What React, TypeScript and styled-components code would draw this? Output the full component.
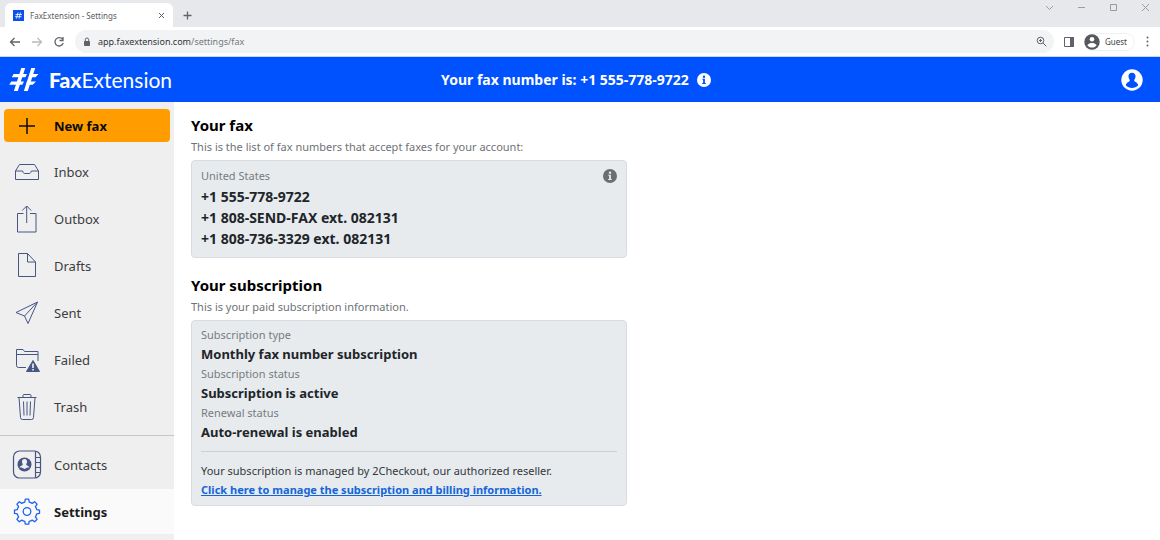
import React from "react";
import styled, { createGlobalStyle, css } from "styled-components";

const GlobalStyle = createGlobalStyle`
  * { box-sizing: border-box; }
  body { margin: 0; background: #fff; font-family: "Noto Sans", "Open Sans", sans-serif; font-size: 11px; color: #212529; }
  button, input { font: inherit; }
  h2, p, dl, dd, dt, ul { margin: 0; padding: 0; }
`;

const Page = styled.div`
  min-height: 100vh;
  display: flex;
  flex-direction: column;
`;

const TabStrip = styled.div`
  height: 27px;
  padding: 3px 10px 0 5px;
  background: #e7e8ec;
  display: flex;
  align-items: stretch;
`;

const Tab = styled.div`
  width: 168px;
  padding: 0 8px;
  background: #fff;
  border-radius: 6px 6px 0 0;
  display: flex;
  align-items: center;
  gap: 6px;
  font-size: 8px;
  color: #5a5d60;
`;

const TabTitle = styled.span`
  flex: 1;
  white-space: nowrap;
`;

const GlyphButton = styled.button<{ $color?: string }>`
  padding: 0;
  border: 0;
  background: none;
  color: ${(p) => p.$color ?? "#5f6368"};
  display: flex;
  align-items: center;
  justify-content: center;
  cursor: pointer;
`;

const NewTab = styled(GlyphButton)`
  margin-left: 9px;
`;

const WindowControls = styled.div`
  margin-left: auto;
  display: flex;
  gap: 23px;
  padding-bottom: 16px;
  align-items: center;
`;

const Toolbar = styled.div`
  height: 30px;
  padding: 0 10px 0 9px;
  background: #fff;
  border-bottom: 1px solid #c5d9fb;
  display: flex;
  align-items: center;
  gap: 10px;
`;

const AddressBar = styled.div`
  flex: 1;
  height: 23px;
  padding: 0 7px 0 8px;
  border-radius: 12px;
  background: #f1f3f4;
  display: flex;
  align-items: center;
  gap: 7px;
`;

const Address = styled.div`
  flex: 1;
  font-size: 9px;
  color: #75787b;
  b { font-weight: 400; color: #303336; }
`;

const ProfileChip = styled.button`
  height: 18px;
  padding: 0 7px 0 0;
  border: 1px solid #eff0f1;
  border-left: 0;
  border-radius: 9px;
  background: #fff;
  color: #3f4246;
  font-size: 8px;
  display: flex;
  align-items: center;
  gap: 5px;
`;

const Header = styled.header`
  height: 45px;
  padding: 0 17px 0 9px;
  background: #0052ff;
  color: #fff;
  display: grid;
  grid-template-columns: 1fr auto 1fr;
  align-items: center;
`;

const Brand = styled.a`
  display: flex;
  align-items: center;
  gap: 10px;
  color: inherit;
  text-decoration: none;
  font-family: Lato, sans-serif;
  font-size: 21px;
  line-height: 26px;
  b { font-weight: 900; }
`;

const FaxNumber = styled.div`
  display: flex;
  align-items: center;
  gap: 8px;
  font-size: 14px;
  font-weight: 700;
`;

const AccountButton = styled(GlyphButton)`
  justify-self: end;
`;

const Body = styled.div`
  flex: 1;
  display: flex;
`;

const Sidebar = styled.nav`
  width: 174px;
  flex: none;
  padding-top: 7px;
  background: #efefef;
`;

const NewFaxButton = styled.button`
  width: calc(100% - 8px);
  height: 33px;
  margin: 0 4px 7px;
  padding: 0 0 0 8px;
  border: 0;
  border-radius: 4px;
  background: #ff9d00;
  color: #0b0b0b;
  font-size: 13px;
  font-weight: 700;
  display: flex;
  align-items: center;
  gap: 12px;
  cursor: pointer;
`;

const NavList = styled.ul`
  list-style: none;
  display: flex;
  flex-direction: column;
  gap: 2px;
  & + & {
    margin-top: 6px;
    padding-top: 6px;
    border-top: 1px solid #c6c7c9;
  }
`;

const NavLink = styled.a<{ $active?: boolean }>`
  height: 45px;
  padding-left: 12px;
  display: flex;
  align-items: center;
  gap: 12px;
  font-size: 13px;
  color: #3b3d40;
  text-decoration: none;
  svg { color: #465684; }
  ${(p) =>
    p.$active &&
    css`
      background: #fafafa;
      color: #1c1c1c;
      font-weight: 700;
      svg { color: #1f63f0; }
    `}
`;

const Main = styled.main`
  flex: 1;
  padding: 13px 17px 0;
`;

const Section = styled.section`
  max-width: 436px;
  & + & { margin-top: 17px; }
`;

const Title = styled.h2`
  font-size: 15px;
  line-height: 20px;
  color: #000;
`;

const Lead = styled.p`
  margin: 2px 0 4px;
  line-height: 19px;
  color: #6f7275;
`;

const Card = styled.div`
  padding: 4px 9px 6px;
  border: 1px solid #d8dce0;
  border-radius: 4px;
  background: #e7ebee;
`;

const CardRow = styled.div`
  height: 21px;
  display: flex;
  align-items: center;
  justify-content: space-between;
  color: #777b7f;
`;

const NumberList = styled.ul`
  list-style: none;
  padding-bottom: 2px;
  font-size: 14px;
  line-height: 21px;
  font-weight: 700;
`;

const Term = styled.dt`
  line-height: 19px;
  color: #777b7f;
`;

const Detail = styled.dd`
  font-size: 13px;
  line-height: 20px;
  font-weight: 700;
`;

const Rule = styled.hr`
  height: 1px;
  margin: 9px 0;
  border: 0;
  background: #cbd0d4;
`;

const Note = styled.p`
  line-height: 19px;
  color: #33373b;
`;

const ManageLink = styled.a`
  font-weight: 700;
  color: #1565d8;
`;

const Stroke = ({ size, width = 1, children }: { size: number; width?: number; children: React.ReactNode }) => (
  <svg width={size} height={size} viewBox={`0 0 ${size} ${size}`} fill="none" stroke="currentColor" strokeWidth={width} aria-hidden="true">
    {children}
  </svg>
);

const HashMark = () => (
  <svg width="30" height="25" viewBox="0 0 30 25" fill="currentColor" aria-hidden="true">
    <path d="M12.300 1h3.900L8.800 24H4.900zM22.300 1h3.900l-7.400 23h-3.900z" />
    <path d="M4.600 7H18l-1.600 3.300H2.800zM22 7h7.600l-3.200 3.300H20zM2.300 14.500H15l-1.600 3.300H.2zM18 14.500h9l-3.200 3.300H17z" />
  </svg>
);

const InfoIcon = ({ ink }: { ink: string }) => (
  <svg width="14" height="14" viewBox="0 0 14 14" aria-hidden="true">
    <circle cx="7" cy="7" r="7" fill="currentColor" />
    <path d="M5.300 5.700h2.600v4.200h.9v1H5.200v-1h.9V6.700h-.8z" fill={ink} />
    <circle cx="7" cy="3.700" r="1.200" fill={ink} />
  </svg>
);

const navMain = [
  {
    label: "Inbox",
    icon: <path d="M3.500 14 7.500 7.500h15l4 6.500v8.500h-23V14h7.200c.4 1 .5 2.500 2 2.500h4.600c1.500 0 1.600-1.500 2-2.500h7.200" />,
  },
  {
    label: "Outbox",
    icon: <path d="M11.500 9.500H5.500v18.500h18.500V9.500h-6M14.700 19V2M10.200 6.500l4.500-4.500 4.500 4.500" />,
  },
  {
    label: "Drafts",
    icon: <path d="M6.500 2.500h9l8 8.500v14.500h-17zM15.500 2.500V11h8" />,
  },
  {
    label: "Sent",
    icon: <path d="M4 14.500 25.500 4 16 25.500 12.500 18zM25.500 4 12.500 18" strokeLinejoin="round" />,
  },
  {
    label: "Failed",
    icon: (
      <>
        <path d="M14 22.500H6.500a2 2 0 0 1-2-2v-16h6.500l1.500 2h13.500V16M4.500 9.500H26" />
        <path d="M21 15.500 27.500 26.500h-13z" fill="currentColor" strokeLinejoin="round" />
        <path d="M21 18.500v4.500M21 24v1.500" stroke="#fff" strokeWidth="1.500" />
      </>
    ),
  },
  {
    label: "Trash",
    icon: (
      <path d="M5.500 5.500h19M11 5.500V3.500q0-1 1-1h6q1 0 1 1v2M7 5.500l1.500 20q0 2 2 2h9q2 0 2-2l1.500-20M11.500 9.500l.5 14M15 9.500v14M18.500 9.500l-.5 14" />
    ),
  },
];

const navMore = [
  {
    label: "Contacts",
    active: false,
    icon: (
      <>
        <rect x="1.500" y="1" width="27" height="27" rx="6" />
        <path d="M23.500 1v27M23.500 7.500h5M23.500 12.500h5M23.500 17.500h5M23.500 22.500h5" />
        <circle cx="12.500" cy="14.500" r="7" fill="currentColor" stroke="none" />
        <path d="M12.500 9c2 0 2.800 1.400 2.500 3.200-.2 1-.8 1.500-.8 2.200 0 1.100 2.800 1.200 3.200 3.100h-2l-2.900 1.500-2.900-1.500h-2c.4-1.900 3.200-2 3.200-3.100 0-.7-.6-1.200-.8-2.200-.3-1.800.5-3.200 2.500-3.200z" fill="#efefef" stroke="none" />
      </>
    ),
  },
  {
    label: "Settings",
    active: true,
    icon: (
      <g strokeWidth="1.300" strokeLinejoin="round">
        <circle cx="15" cy="14.500" r="3.800" />
        <path d="M13.300 2.200h3.400l.5 2.900q1.700.4 3 1.300l2.500-1.700 2.400 2.400-1.700 2.500q.9 1.300 1.300 3l2.800.5v3.300l-2.800.5q-.4 1.700-1.300 3l1.700 2.500-2.400 2.400-2.500-1.700q-1.300.9-3 1.300l-.5 2.800h-3.400l-.5-2.800q-1.700-.4-3-1.300l-2.500 1.700-2.400-2.400 1.700-2.500q-.9-1.300-1.300-3l-2.800-.5v-3.300l2.800-.5q.4-1.700 1.300-3L4.900 7.100l2.400-2.400 2.500 1.700q1.300-.9 3-1.300z" />
      </g>
    ),
  },
];

const faxNumbers = ["+1 555-778-9722", "+1 808-SEND-FAX ext. 082131", "+1 808-736-3329 ext. 082131"];

const details = [
  ["Subscription type", "Monthly fax number subscription"],
  ["Subscription status", "Subscription is active"],
  ["Renewal status", "Auto-renewal is enabled"],
];

export default function App() {
  return (
    <Page>
      <GlobalStyle />
      <TabStrip>
        <Tab>
          <svg width="11" height="11" viewBox="0 0 11 11" aria-hidden="true">
            <path fill="#0b50ee" d="M0 0h11v11H0z" />
            <path d="M5 2.500 3.500 8.500M7.500 2.500 6 8.500M2.500 4.500h6.500M2 6.700h6.500" stroke="#fff" strokeWidth=".8" />
          </svg>
          <TabTitle>FaxExtension - Settings</TabTitle>
          <GlyphButton aria-label="Close tab">
            <Stroke size={7}><path d="m1 1 5 5M6 1 1 6" /></Stroke>
          </GlyphButton>
        </Tab>
        <NewTab aria-label="New tab">
          <Stroke size={11} width={1.3}><path d="M5.500 1.500v8M1.500 5.500h8" /></Stroke>
        </NewTab>
        <WindowControls>
          <GlyphButton aria-label="Search tabs" $color="#999b9e"><Stroke size={9}><path d="m1 3 3.500 3.500L8 3" /></Stroke></GlyphButton>
          <GlyphButton aria-label="Minimize" $color="#999b9e"><Stroke size={9}><path d="M1 4.500h7" /></Stroke></GlyphButton>
          <GlyphButton aria-label="Maximize" $color="#999b9e"><Stroke size={9}><path d="M1.500 1.500h6v6h-6z" /></Stroke></GlyphButton>
          <GlyphButton aria-label="Close" $color="#999b9e"><Stroke size={9}><path d="m1 1 7 7M8 1 1 8" /></Stroke></GlyphButton>
        </WindowControls>
      </TabStrip>
      <Toolbar>
        <GlyphButton aria-label="Back"><Stroke size={12} width={1.3}><path d="M11 6H1.500M5.500 2l-4 4 4 4" /></Stroke></GlyphButton>
        <GlyphButton aria-label="Forward" $color="#b9bbbe"><Stroke size={12} width={1.3}><path d="M1 6h9.500M6.500 2l4 4-4 4" /></Stroke></GlyphButton>
        <GlyphButton aria-label="Reload"><Stroke size={12} width={1.3}><path d="M9.500 3.200A4.200 4.200 0 1 0 10.200 7M10 1v3.500H6.500" /></Stroke></GlyphButton>
        <AddressBar>
          <svg width="8" height="10" viewBox="0 0 8 10" aria-hidden="true">
            <path d="M1.500 4.500h5v4h-5z" fill="#5f6368" stroke="#5f6368" strokeLinejoin="round" />
            <path d="M2.300 4V2.700a1.700 1.700 0 0 1 3.400 0V4" fill="none" stroke="#5f6368" />
          </svg>
          <Address><b>app.faxextension.com</b>/settings/fax</Address>
          <GlyphButton aria-label="Zoom">
            <Stroke size={11}><circle cx="4.500" cy="4.500" r="3.300" /><path d="m7 7 3.300 3.300M3 4.500h3M4.500 3v3" /></Stroke>
          </GlyphButton>
        </AddressBar>
        <GlyphButton aria-label="Side panel">
          <svg width="10" height="10" viewBox="0 0 10 10" aria-hidden="true"><path d="M.5.500h9v9h-9z" fill="none" stroke="currentColor" /><path d="M6 0h4v10H6z" fill="currentColor" /></svg>
        </GlyphButton>
        <ProfileChip>
          <svg width="16" height="16" viewBox="0 0 16 16" aria-hidden="true">
            <circle cx="8" cy="8" r="7.700" fill="#55585c" />
            <circle cx="8" cy="5.300" r="2.300" fill="#fff" />
            <path d="M3.300 11.200C4.300 9.300 6.400 8.900 8 8.900s3.700.4 4.700 2.300C11.500 12.800 9.900 13.500 8 13.500s-3.500-.7-4.700-2.300z" fill="#fff" />
          </svg>
          Guest
        </ProfileChip>
        <GlyphButton aria-label="Menu">
          <svg width="5" height="11" viewBox="0 0 5 11" fill="currentColor" aria-hidden="true"><circle cx="2.500" cy="1.500" r="1" /><circle cx="2.500" cy="5.500" r="1" /><circle cx="2.500" cy="9.500" r="1" /></svg>
        </GlyphButton>
      </Toolbar>
      <Header>
        <Brand href="#home">
          <HashMark />
          <span><b>Fax</b>Extension</span>
        </Brand>
        <FaxNumber>
          Your fax number is: +1 555-778-9722
          <GlyphButton aria-label="Fax number information" $color="#fff"><InfoIcon ink="#0052ff" /></GlyphButton>
        </FaxNumber>
        <AccountButton aria-label="Account" $color="#fff">
          <svg width="22" height="22" viewBox="0 0 22 22" aria-hidden="true">
            <circle cx="11" cy="11" r="10.700" fill="#fff" />
            <path d="M11 3.800c2.500 0 3.800 1.700 3.500 4.200-.2 1.700-1.300 2.400-1.300 3.600 0 1.600 3.600 1.500 4 5-1.700 1.600-3.900 2.400-6.200 2.400s-4.500-.8-6.200-2.400c.4-3.500 4-3.400 4-5 0-1.200-1.100-1.900-1.300-3.600-.3-2.500 1-4.200 3.500-4.200z" fill="#0052ff" />
          </svg>
        </AccountButton>
      </Header>
      <Body>
        <Sidebar>
          <NewFaxButton>
            <Stroke size={30} width={1.5}><path d="M15 7v16M7 15h16" /></Stroke>
            New fax
          </NewFaxButton>
          <NavList>
            {navMain.map((item) => (
              <li key={item.label}>
                <NavLink href={`#${item.label.toLowerCase()}`}><Stroke size={30}>{item.icon}</Stroke>{item.label}</NavLink>
              </li>
            ))}
          </NavList>
          <NavList>
            {navMore.map((item) => (
              <li key={item.label}>
                <NavLink href={`#${item.label.toLowerCase()}`} $active={item.active}><Stroke size={30} width={1.2}>{item.icon}</Stroke>{item.label}</NavLink>
              </li>
            ))}
          </NavList>
        </Sidebar>
        <Main>
          <Section>
            <Title>Your fax</Title>
            <Lead>This is the list of fax numbers that accept faxes for your account:</Lead>
            <Card>
              <CardRow>
                United States
                <GlyphButton aria-label="About these numbers" $color="#6c6f72"><InfoIcon ink="#e7ebee" /></GlyphButton>
              </CardRow>
              <NumberList>
                {faxNumbers.map((n) => (
                  <li key={n}>{n}</li>
                ))}
              </NumberList>
            </Card>
          </Section>
          <Section>
            <Title>Your subscription</Title>
            <Lead>This is your paid subscription information.</Lead>
            <Card>
              <dl>
                {details.map(([term, value]) => (
                  <React.Fragment key={term}>
                    <Term>{term}</Term>
                    <Detail>{value}</Detail>
                  </React.Fragment>
                ))}
              </dl>
              <Rule />
              <Note>Your subscription is managed by 2Checkout, our authorized reseller.</Note>
              <Note><ManageLink href="#billing">Click here to manage the subscription and billing information.</ManageLink></Note>
            </Card>
          </Section>
        </Main>
      </Body>
    </Page>
  );
}
